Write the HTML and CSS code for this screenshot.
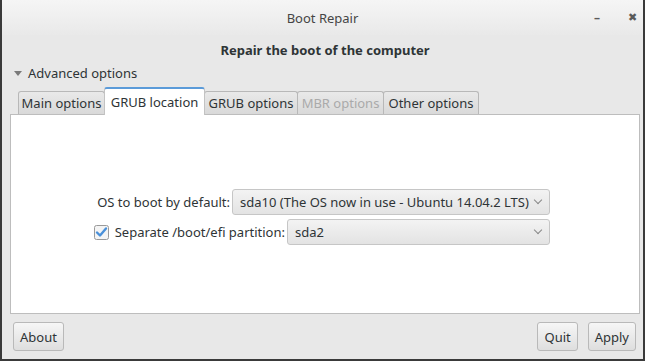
FILE: index.html
```html
<!DOCTYPE html>
<html lang="en">
<head>
  <meta charset="UTF-8" />
  <title>Boot Repair</title>
  <link rel="stylesheet" href="styles.css">
</head>
<body>
  <div class="window">
    <div class="titlebar">
      <span class="title">Boot Repair</span>
      <span class="wm-btn min">&#8211;</span>
      <span class="wm-btn close">&#10006;</span>
    </div>

    <div class="content">
      <div class="heading">Repair the boot of the computer</div>

      <div class="expander"><span class="arrow"></span>Advanced options</div>

      <div class="notebook">
        <div class="tabs">
          <div class="tab tab-main">Main options</div>
          <div class="tab tab-loc active">GRUB location</div>
          <div class="tab tab-grub">GRUB options</div>
          <div class="tab tab-mbr disabled">MBR options</div>
          <div class="tab tab-other">Other options</div>
        </div>
        <div class="page">
          <div class="row">
            <span class="label">OS to boot by default:</span>
            <div class="combo wide">sda10 (The OS now in use - Ubuntu 14.04.2 LTS)<span class="chev"></span></div>
          </div>
          <div class="row">
            <span class="check">
              <svg width="15" height="15" viewBox="0 0 15 15">
                <rect x="0.5" y="0.5" width="14" height="14" rx="2" fill="#f4f4f4" stroke="#9a9a9a"/>
                <path d="M3 7.5 L6 10.5 L12 3.5" fill="none" stroke="#4a90d9" stroke-width="2.4" stroke-linecap="round" stroke-linejoin="round"/>
              </svg>
            </span>
            <span class="label">Separate /boot/efi partition:</span>
            <div class="combo narrow">sda2<span class="chev"></span></div>
          </div>
        </div>
      </div>

      <div class="actions">
        <button class="btn">About</button>
        <div class="spacer"></div>
        <button class="btn">Quit</button>
        <button class="btn">Apply</button>
      </div>
    </div>
  </div>
</body>
</html>
```

FILE: styles.css
```css
body {
  margin: 0;
  font-family: 'Noto Sans', 'DejaVu Sans', sans-serif;
  font-size: 13px;
  color: #2e3436;
  background: #2b2b2b;
}

.window {
  width: 641px;
  height: 359px;
  border-left: 2px solid #3a3a3a;
  border-right: 2px solid #3a3a3a;
  border-bottom: 2px solid #3a3a3a;
  background: #e8e8e8;
  display: flex;
  flex-direction: column;
}

/* title bar */
.titlebar {
  height: 35px;
  flex: none;
  background: linear-gradient(#f5f5f5, #e9e9e9);
  display: flex;
  align-items: center;
  justify-content: center;
  position: relative;
}

.title {
  color: #454545;
}

.wm-btn {
  position: absolute;
  top: 9px;
  color: #5a5a5a;
  font-size: 12px;
}

.min { left: 592px; font-weight: bold; }
.close { left: 626px; font-size: 11px; }

.content {
  flex: 1;
  display: flex;
  flex-direction: column;
  padding: 0 3px 0 8px;
}

.heading {
  text-align: center;
  font-weight: bold;
  margin-top: 6px;
  height: 18px;
  line-height: 18px;
}

.expander {
  margin-top: 5px;
  height: 18px;
  line-height: 18px;
  display: flex;
  align-items: center;
  padding-left: 4px;
}

.arrow {
  width: 0;
  height: 0;
  border-left: 4px solid transparent;
  border-right: 4px solid transparent;
  border-top: 5px solid #7a7a7a;
  margin-right: 6px;
}

/* notebook */
.notebook {
  margin-top: 4px;
  display: flex;
  flex-direction: column;
}

.tabs {
  display: flex;
  align-items: flex-end;
  padding-left: 8px;
  height: 28px;
}

.tab {
  box-sizing: border-box;
  height: 23px;
  line-height: 22px;
  text-align: center;
  border: 1px solid #b8b8b8;
  border-bottom: none;
  border-radius: 3px 3px 0 0;
  background: linear-gradient(#e9e9e9, #d9d9d9);
  margin-right: -1px;
  white-space: nowrap;
}

.tab-main { width: 87px; }
.tab-loc { width: 101px; }
.tab-grub { width: 94px; }
.tab-mbr { width: 87px; }
.tab-other { width: 96px; }

.tab.active {
  height: 28px;
  line-height: 26px;
  background: #fff;
  border-color: #c3c3c3;
  border-top: 2px solid #5b9bd9;
  position: relative;
  z-index: 1;
  margin-bottom: -1px;
}

.tab.disabled {
  color: #aaa;
}

.page {
  height: 200px;
  background: #fff;
  border: 1px solid #bdbdbd;
  display: flex;
  flex-direction: column;
  align-items: flex-end;
  padding-top: 73px;
  box-sizing: border-box;
  padding-right: 89px;
}

.row {
  display: flex;
  align-items: center;
  height: 28px;
  margin-bottom: 2px;
}

.label {
  margin-right: 2px;
}

.check {
  display: flex;
  margin-right: 6px;
}

.combo {
  height: 26px;
  box-sizing: border-box;
  border: 1px solid #c6c6c6;
  border-radius: 3px;
  background: linear-gradient(#f3f3f3, #e3e3e3);
  display: flex;
  align-items: center;
  padding: 0 8px 0 7px;
  justify-content: space-between;
}

.combo.wide { width: 318px; }
.combo.narrow { width: 263px; }

.chev {
  width: 5px;
  height: 5px;
  border-right: 1.5px solid #888;
  border-bottom: 1.5px solid #888;
  transform: rotate(45deg);
  margin-top: -4px;
  margin-left: 6px;
}

/* bottom buttons */
.actions {
  display: flex;
  align-items: center;
  margin-top: 8px;
  padding-right: 4px;
  padding-left: 3px;
}

.spacer { flex: 1; }

.btn {
  font-family: inherit;
  font-size: 13px;
  color: #2e3436;
  height: 29px;
  padding: 0 6px;
  border: 1px solid #b9b9b9;
  border-radius: 3px;
  background: linear-gradient(#f6f6f6, #dedede);
  margin-left: 10px;
}

.btn:first-child { margin-left: 0; }
```
